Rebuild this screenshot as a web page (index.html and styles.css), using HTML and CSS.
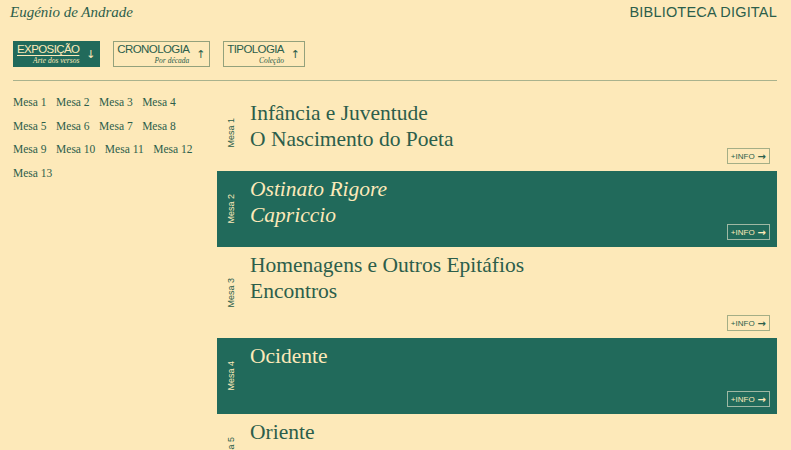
FILE: index.html
```html
<!DOCTYPE html>
<html>
<head>
  <title>Eugénio de Andrade - Biblioteca Digital</title>
  <link rel="stylesheet" href="styles.css">
</head>
<body>
    <header class="topbar">
        <a class="author">Eugénio de Andrade</a>
        <a class="site-name">BIBLIOTECA DIGITAL</a>
    </header>

    <nav class="filters">
        <button class="filter active">
            <span class="filter-text">
                <span class="filter-name">EXPOSIÇÃO</span>
                <span class="filter-sub">Arte dos versos</span>
            </span>
            <span class="filter-arrow">&#8595;</span>
        </button>
        <button class="filter">
            <span class="filter-text">
                <span class="filter-name">CRONOLOGIA</span>
                <span class="filter-sub">Por década</span>
            </span>
            <span class="filter-arrow">&#8593;</span>
        </button>
        <button class="filter">
            <span class="filter-text">
                <span class="filter-name">TIPOLOGIA</span>
                <span class="filter-sub">Coleção</span>
            </span>
            <span class="filter-arrow">&#8593;</span>
        </button>
    </nav>

    <main class="content">
        <ul class="mesa-index">
            <li>Mesa 1</li><li>Mesa 2</li><li>Mesa 3</li><li>Mesa 4</li>
            <li>Mesa 5</li><li>Mesa 6</li><li>Mesa 7</li><li>Mesa 8</li>
            <li>Mesa 9</li><li>Mesa 10</li><li>Mesa 11</li><li>Mesa 12</li>
            <li>Mesa 13</li>
        </ul>

        <section class="mesas">
            <article class="mesa">
                <span class="mesa-label">Mesa 1</span>
                <div class="mesa-body">
                    <h2 class="mesa-title">Infância e Juventude<br>O Nascimento do Poeta</h2>
                    <button class="info">+INFO <span class="info-arrow">&#8594;</span></button>
                </div>
            </article>
            <article class="mesa dark">
                <span class="mesa-label">Mesa 2</span>
                <div class="mesa-body">
                    <h2 class="mesa-title italic">Ostinato Rigore<br>Capriccio</h2>
                    <button class="info">+INFO <span class="info-arrow">&#8594;</span></button>
                </div>
            </article>
            <article class="mesa tall">
                <span class="mesa-label">Mesa 3</span>
                <div class="mesa-body">
                    <h2 class="mesa-title">Homenagens e Outros Epitáfios<br>Encontros</h2>
                    <button class="info">+INFO <span class="info-arrow">&#8594;</span></button>
                </div>
            </article>
            <article class="mesa dark">
                <span class="mesa-label">Mesa 4</span>
                <div class="mesa-body">
                    <h2 class="mesa-title">Ocidente</h2>
                    <button class="info">+INFO <span class="info-arrow">&#8594;</span></button>
                </div>
            </article>
            <article class="mesa">
                <span class="mesa-label">Mesa 5</span>
                <div class="mesa-body">
                    <h2 class="mesa-title">Oriente</h2>
                </div>
            </article>
        </section>
    </main>
</body>
</html>
```

FILE: styles.css
```css
/* Page */
body {
    margin: 0;
    padding: 0 14px 0 13px;
    background-color: #fde9b9; /* warm paper */
    color: #2c5e4b;
    font-family: 'Liberation Serif', 'Times New Roman', serif;
    height: 450px;
    overflow: hidden;
}

/* Top bar */
.topbar {
    display: flex;
    justify-content: space-between;
    align-items: baseline;
    height: 41px;
    padding-top: 4px;
    box-sizing: border-box;
}

.author {
    font-style: italic;
    font-size: 15px;
    margin-left: -3px;
}

.site-name {
    font-family: 'Liberation Sans', Arial, sans-serif;
    font-size: 14.5px;
    letter-spacing: 0.2px;
}

/* Filter buttons */
.filters {
    display: flex;
    gap: 13px;
    padding-bottom: 13px;
    border-bottom: 1px solid #a9b28d;
}

.filter {
    display: flex;
    align-items: center;
    gap: 6px;
    height: 26px;
    padding: 0 3px 0 3px;
    background: transparent;
    color: #2c5e4b;
    border: 1px solid #93a17c;
    border-radius: 0;
    font: inherit;
    cursor: pointer;
}

.filter.active {
    background-color: #216a5b;
    color: #fde9b9;
    border-color: #216a5b;
}

.filter-text {
    display: flex;
    flex-direction: column;
    align-items: flex-end;
    line-height: 1;
}

.filter-name {
    font-family: 'Liberation Sans', Arial, sans-serif;
    font-size: 11.5px;
    letter-spacing: -0.6px;
}

.filter.active .filter-name {
    text-decoration: underline;
    text-underline-offset: 2px;
}

.filter-sub {
    font-style: italic;
    font-size: 7.5px;
    margin-top: 1px;
}

.filter-arrow {
    font-family: 'DejaVu Sans', sans-serif;
    font-size: 11px;
    width: 11px;
    text-align: center;
}

/* Main area */
.content {
    display: grid;
    grid-template-columns: 204px 1fr;
    padding-top: 14px;
}

.mesa-index {
    list-style: none;
    margin: 0;
    padding: 0;
    display: flex;
    flex-wrap: wrap;
    align-content: flex-start;
    column-gap: 9.5px;
    row-gap: 9px;
    font-size: 11.5px;
    line-height: 14.5px;
    width: 200px;
}

/* Mesa rows */
.mesas {
    display: flex;
    flex-direction: column;
}

.mesa {
    display: grid;
    grid-template-columns: 33px 1fr;
    min-height: 76px;
}

.mesa.tall {
    min-height: 91px;
}

.mesa.dark {
    background-color: #216a5b;
    color: #fde9b9;
}

.mesa-label {
    writing-mode: vertical-rl;
    transform: rotate(180deg);
    justify-self: center;
    align-self: center;
    font-family: 'Liberation Sans', Arial, sans-serif;
    font-size: 9px;
    margin-right: 5px;
}

.mesa-body {
    display: grid;
    padding: 5px 7px 7px 0;
}

.mesa-title {
    grid-area: 1 / 1;
    align-self: start;
    margin: 0;
    font-weight: normal;
    font-size: 21.5px;
    line-height: 26px;
}

.mesa-title.italic {
    font-style: italic;
}

.info {
    grid-area: 1 / 1;
    align-self: end;
    justify-self: end;
    display: flex;
    align-items: center;
    gap: 3px;
    height: 16px;
    padding: 0 3px;
    background: transparent;
    color: inherit;
    border: 1px solid #a4ae86;
    border-radius: 0;
    font-family: 'Liberation Sans', Arial, sans-serif;
    font-size: 8px;
}

.mesa.dark .info {
    border-color: #9fb8a4;
}

.info-arrow {
    font-family: 'DejaVu Sans', sans-serif;
    font-size: 10px;
    font-weight: bold;
}
```
